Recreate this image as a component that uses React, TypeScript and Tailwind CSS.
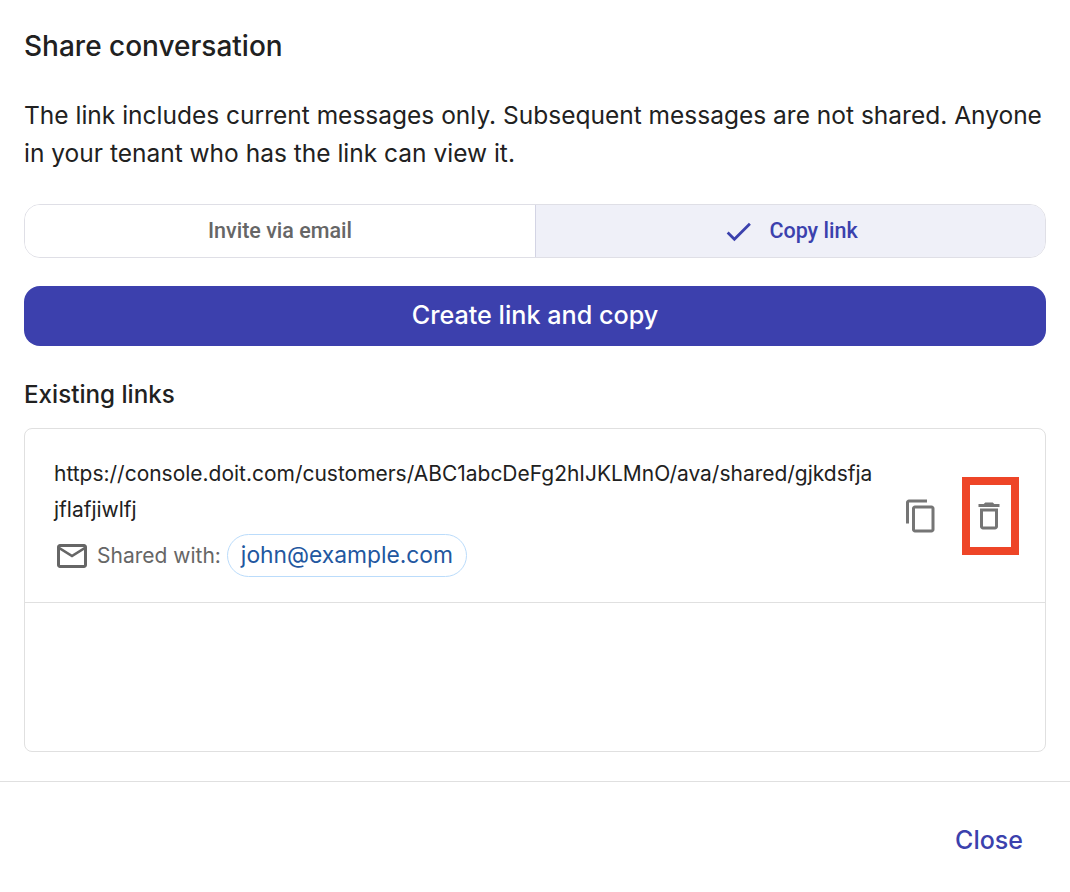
const Icon = ({ d, className }: { d: string; className: string }) => (
  <svg viewBox="0 0 24 24" fill="currentColor" className={className}>
    <path d={d} />
  </svg>
);

export default function App() {
  return (
    <div className="w-[1070px] h-[892px] bg-white text-[#212121] font-['Inter',sans-serif] overflow-hidden flex flex-col">
      <div className="px-6 pt-[27px] h-[781px]">
        <h1 className="text-[28px] leading-[38px] font-medium">Share conversation</h1>
        <p className="mt-[31px] text-[24.5px] leading-[38px]">
          The link includes current messages only. Subsequent messages are not shared. Anyone in your tenant who has the link can view it.
        </p>
        <div className="mt-[32px] flex h-[54px] rounded-2xl border border-[#dfdfe6] overflow-hidden font-['Roboto',sans-serif] text-[21.5px] font-medium">
          <div className="w-[510px] flex items-center justify-center text-[#666666] bg-white">Invite via email</div>
          <div className="flex-1 flex items-center justify-center gap-[14px] pr-[1px] bg-[#eff0f8] border-l border-[#d3d4e4] text-[#3b41ad]">
            <Icon className="w-[33px] h-[33px]" d="M9 16.17 4.83 12l-1.42 1.41L9 19 21 7l-1.41-1.41z" />
            <span>Copy link</span>
          </div>
        </div>
        <button className="mt-[28px] w-full h-[60px] rounded-2xl bg-[#3c40ad] text-white text-[25.2px] font-medium flex items-center justify-center">
          Create link and copy
        </button>
        <h2 className="mt-[31px] text-[24.2px] leading-[36px] font-medium">Existing links</h2>
        <div className="mt-[15px] h-[324px] rounded-lg border border-[#e0e0e0]">
          <div className="relative h-[174px] border-b border-[#e0e0e0] pl-[29px] pr-[172px] pt-[27px] flex flex-col">
            <div className="text-[20.98px] leading-[36px] break-all">
              https://console.doit.com/customers/ABC1abcDeFg2hIJKLMnO/ava/shared/gjkdsfjajflafjiwlfj
            </div>
            <div className="mt-[6px] flex items-center">
              <Icon className="w-[36px] h-[36px] text-[#666666] shrink-0" d="M20 4H4c-1.1 0-1.99.9-1.99 2L2 18c0 1.1.9 2 2 2h16c1.1 0 2-.9 2-2V6c0-1.1-.9-2-2-2zm0 14H4V8l8 5 8-5v10zm-8-7L4 6h16l-8 5z" />
              <span className="ml-[7px] text-[21px] text-[#666666]">Shared with:</span>
              <span className="ml-[6px] h-[43px] px-[13px] flex items-center rounded-full border border-[#bbdcfb] text-[#22579f] text-[22.8px]">john@example.com</span>
            </div>
            <div className="absolute left-[878px] top-[69px] text-[#757575]">
              <Icon className="w-[36px] h-[36px]" d="M16 1H4c-1.1 0-2 .9-2 2v14h2V3h12V1zm3 4H8c-1.1 0-2 .9-2 2v14c0 1.1.9 2 2 2h11c1.1 0 2-.9 2-2V7c0-1.1-.9-2-2-2zm0 16H8V7h11v14z" />
            </div>
            <div className="absolute left-[937px] top-[48px] w-[57px] h-[78px] border-[8px] border-[#ee4527] flex items-center justify-center text-[#757575]">
              <Icon className="w-[36px] h-[36px] shrink-0 -ml-[3px]" d="M6 19c0 1.1.9 2 2 2h8c1.1 0 2-.9 2-2V7H6v12zM8 9h8v10H8V9zm7.5-5-1-1h-5l-1 1H5v2h14V4z" />
            </div>
          </div>
        </div>
      </div>
      <div className="flex-1 border-t border-[#e0e0e0] flex items-center justify-end pr-[47px] pt-[8px]">
        <span className="text-[25px] font-medium text-[#3b41ad]">Close</span>
      </div>
    </div>
  );
}
